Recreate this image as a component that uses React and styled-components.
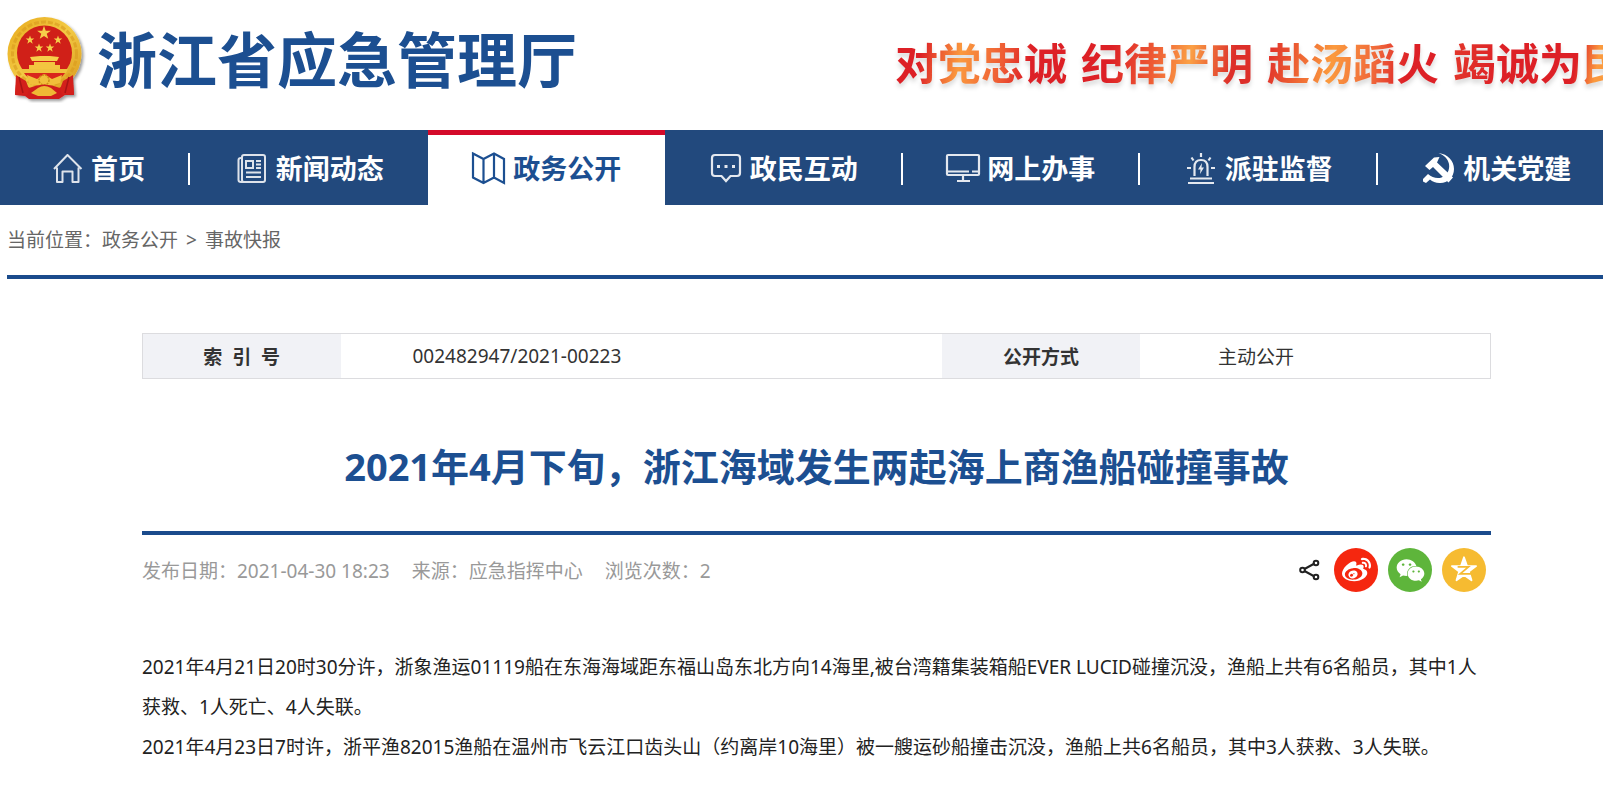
import styled, { createGlobalStyle } from "styled-components";
import { FaWeibo, FaWeixin } from "react-icons/fa";

const GlobalStyle = createGlobalStyle`
  * {
    box-sizing: border-box;
  }

  body {
    margin: 0;
    overflow-x: hidden;
    background-color: #fff;
    color: #222;
    font-family: "Noto Sans", "Noto Sans CJK SC", sans-serif;
    font-size: 19px;
  }

  a {
    color: inherit;
    text-decoration: none;
  }
`;

const HeaderBar = styled.header`
  display: flex;
  align-items: center;
  height: 130px;
  padding: 0 0 12px 7px;
  overflow: hidden;
`;

const Emblem = styled.svg`
  flex: none;
  width: 80px;
  height: 88px;
`;

const SiteName = styled.h1`
  flex: none;
  margin: 2px 0 0 10px;
  color: #1c4f91;
  font-size: 60px;
  font-weight: 700;
  line-height: 88px;
`;

const Slogan = styled.div`
  display: flex;
  flex: none;
  gap: 14px;
  margin: 10px -22px 0 auto;
  font-size: 43px;
  font-weight: 700;
  line-height: 60px;
  filter: drop-shadow(0 4px 2px rgba(0, 0, 0, 0.14));
`;

const SloganWord = styled.span`
  background: ${(props) => props.$fill};
  background-clip: text;
  color: transparent;
`;

const NavBar = styled.nav`
  background-color: #22497d;
  overflow: hidden;
`;

const NavList = styled.ul`
  display: grid;
  grid-template-columns: 4fr repeat(6, 5fr);
  width: calc(100% + 12px);
  margin: 0;
  padding: 0;
  list-style: none;
`;

const NavItem = styled.li`
  display: flex;
  align-items: center;
  height: 75px;
  padding-bottom: 2px;
  border-top: 5px solid ${(props) => (props.$active ? "#d40a2a" : "#22497d")};
  background-color: ${(props) => (props.$active ? "#fff" : "#22497d")};
  color: ${(props) => (props.$active ? "#1c4f91" : "#fff")};

  &::after {
    content: "";
    width: ${(props) => (props.$divider ? "2px" : "0")};
    height: 32px;
    background-color: #fff;
  }
`;

const NavLink = styled.a`
  display: flex;
  flex: 1;
  align-items: center;
  justify-content: center;
  gap: 6px;
  padding-left: ${(props) => (props.$first ? "6px" : "0")};
  font-size: 27px;
  font-weight: 700;
  line-height: 40px;

  svg {
    flex: none;
    width: 36px;
    height: 36px;
  }
`;

const Crumbs = styled.div`
  display: flex;
  gap: 8px;
  height: 74px;
  margin-left: 7px;
  padding-top: 20px;
  border-bottom: 4px solid #1a4b8c;
  color: #666;
  line-height: 30px;
`;

const Article = styled.main`
  margin: 54px 112px 0 142px;
`;

const InfoTable = styled.table`
  width: 100%;
  height: 46px;
  border: 1px solid #dcdcdf;
  border-collapse: collapse;
  table-layout: fixed;
  color: #333;
`;

const InfoLabel = styled.th`
  width: 198px;
  padding: 0;
  background-color: #f1f2f6;
  white-space: pre;
`;

const InfoValue = styled.td`
  width: ${(props) => props.$width};
  padding: 0 0 0 ${(props) => props.$indent};
`;

const Title = styled.h2`
  margin: 58px 0 0;
  padding-bottom: 36px;
  border-bottom: 4px solid #1a4b8c;
  color: #1c4f91;
  font-size: 38px;
  font-weight: 700;
  line-height: 58px;
  text-align: center;
`;

const MetaRow = styled.div`
  display: flex;
  align-items: center;
  gap: 22px;
  height: 70px;
  padding-right: 5px;
  color: #999;
`;

const ShareList = styled.div`
  display: flex;
  align-items: center;
  gap: 10px;
  margin-left: auto;
`;

const ShareMark = styled.svg`
  width: 22px;
  height: 22px;
  margin-right: 3px;
`;

const ShareButton = styled.button`
  display: flex;
  align-items: center;
  justify-content: center;
  width: 44px;
  height: 44px;
  padding: 0;
  border: 0;
  border-radius: 50%;
  background-color: ${(props) => props.$color};
  color: #fff;
  font-size: 29px;
`;

const Content = styled.div`
  margin-top: 42px;
  line-height: 40px;

  p {
    margin: 0;
  }
`;

const STAR = "0,-10 2.4,-3.2 9.5,-3.1 3.8,1.2 5.9,8.1 0,4 -5.9,8.1 -3.8,1.2 -9.5,-3.1 -2.4,-3.2";

const stars = [
  { x: 37, y: 18, size: 0.72 },
  { x: 23, y: 25, size: 0.45 },
  { x: 51, y: 25, size: 0.45 },
  { x: 32, y: 33, size: 0.45 },
  { x: 43, y: 33, size: 0.45 },
];

const NationalEmblem = () => (
  <Emblem viewBox="0 0 80 88" role="img" aria-label="国徽">
    <defs>
      <linearGradient id="gold" x1="0" y1="0" x2="1" y2="1">
        <stop offset="0" stopColor="#e8a91c" />
        <stop offset="0.5" stopColor="#f3cb45" />
        <stop offset="1" stopColor="#d9971a" />
      </linearGradient>
      <filter id="shade" x="-10%" y="-10%" width="130%" height="130%">
        <feDropShadow dx="2" dy="2" stdDeviation="1.5" floodOpacity="0.4" />
      </filter>
    </defs>
    <g filter="url(#shade)">
      <path d="M10 58 L8 80 L18 81 L22 84 L52 84 L58 80 L67 80 L65 58 Z" fill="#cf1c1c" />
      <circle cx="37.5" cy="39" r="37" fill="url(#gold)" />
      <circle cx="37.5" cy="39" r="32" fill="none" stroke="#d99a1e" strokeWidth="3" strokeDasharray="5 2" opacity="0.6" />
    </g>
    <circle cx="37.5" cy="38" r="27.5" fill="#d02018" />
    {stars.map((star) => (
      <polygon
        key={`${star.x}-${star.y}`}
        points={STAR}
        fill="#f6cf4a"
        transform={`translate(${star.x} ${star.y}) scale(${star.size})`}
      />
    ))}
    {/* gate */}
    <path d="M33 41 H43 L52 42 L50 46 H25 L23 42 Z" fill="#f6cf4a" />
    <path d="M27 47 H48 V50 H53 V54 H22 V50 H27 Z" fill="#f3c540" />
    <path d="M14 54 H61 L59 58 H16 Z" fill="#f0c23e" />
    <path d="M17 58 H58 Q54 64 48 66 H27 Q20 63 17 58 Z" fill="#d9251c" />
    {/* ribbon and gear */}
    <path d="M9 60 L19 66 L22 74 L20 80 L8 79 Z M66 60 L56 66 L53 74 L55 80 L67 79 Z" fill="#d3201b" />
    <path d="M20 60 L30 64 L37 59 L45 64 L55 60 L53 68 L46 70 L37 74 L29 70 L22 69 Z" fill="#f1bf3a" />
    <circle cx="37" cy="65" r="5" fill="none" stroke="#cf8d17" strokeWidth="1.5" strokeDasharray="2 1" />
    <path d="M22 73 Q37 66 53 73 L50 79 L43 76 L37 78 L31 76 L24 79 Z" fill="#cf1c1c" />
    <path d="M31 73 Q37 69 44 73 L50 78 L44 81 H31 L24 78 Z" fill="#efb934" />
    <path d="M12 62 L16 78 M62 62 L58 78" stroke="#a81414" strokeWidth="1.5" />
  </Emblem>
);

const HomeIcon = () => (
  <svg viewBox="0 0 36 36" fill="none" stroke="currentColor" strokeWidth="2" strokeLinejoin="round" opacity="0.85">
    <path d="M5 18 L18.5 4 L32.5 18 M8 16.5 V31 H13.5 V20.5 H23.5 V31 H29.5 V16.5" />
  </svg>
);

const NewsIcon = () => (
  <svg viewBox="0 0 36 36" fill="none" stroke="currentColor" strokeWidth="2" opacity="0.85">
    <rect x="8" y="4" width="23" height="27" rx="2" />
    <path d="M8 7 H7 Q4.5 7 4.5 9 V29 Q4.5 31 7 31 H11" />
    <rect x="12" y="10" width="7" height="7" />
    <path d="M22 10 H27 M22 13.5 H27 M22 17 H27 M12 21.5 H27 M12 26 H27" />
  </svg>
);

const MapIcon = () => (
  <svg viewBox="0 0 36 36" fill="none" stroke="currentColor" strokeWidth="2.2">
    <path d="M2 2.5 L12.5 8 L23 2.5 L33 8 V32 L23 26.5 L12.5 32 L2 26.5 Z M12.5 8 V32 M23 2.5 V26.5" />
  </svg>
);

const ChatIcon = () => (
  <svg viewBox="0 0 36 36" fill="none" stroke="currentColor" strokeWidth="2.2" opacity="0.88">
    <path d="M7 4 H29 Q32 4 32 7 V22 Q32 25 29 25 H22.5 L18 30 L13.5 25 H7 Q4 25 4 22 V7 Q4 4 7 4 Z" />
    <path d="M9 15.5 H12 M16.5 15.5 H19.5 M24 15.5 H27" strokeWidth="3" />
  </svg>
);

const ScreenIcon = () => (
  <svg viewBox="0 0 36 36" fill="none" stroke="currentColor" strokeWidth="2.2" opacity="0.88">
    <rect x="2" y="4" width="32" height="20" rx="1" />
    <path d="M2 20.5 H24 M27 20.5 H34 M18 24 V29 M12 30 H25" />
  </svg>
);

const AlarmIcon = () => (
  <svg viewBox="0 0 36 36" fill="none" stroke="currentColor" strokeWidth="2.2" opacity="0.88">
    <path d="M11.5 25 V16 Q11.5 9 18 9 Q24.5 9 24.5 16 V25 M7 27.5 H29 M5 32 H31" />
    <path d="M18 2 V6 M8.5 6.5 L10.5 9.5 M27.5 6.5 L25.5 9.5 M4 17 H8 M28 17 H32" />
    <path d="M19 12 L15 18.5 H17.5 L17 23 L21 16.5 H18.5 Z" fill="currentColor" stroke="none" />
  </svg>
);

const PartyIcon = () => (
  <svg viewBox="0 0 36 36" fill="currentColor">
    <path d="M4 15 L13 6.5 L18.5 6 L16 11.5 L32 26.5 L27.5 31.5 L12 16 L8.5 19 Z" />
    <path d="M17.5 2 C27 3 33 10 33 18 C33 27 26 32.5 18.5 32 C14.5 32 11.5 30.5 9 28.5 L5 32 L2 30.5 L2 28 L7 23 C11 26.5 16 28 20.5 26.5 C26 24.5 29 19 28 13 C27 8 23.5 4.5 17.5 2 Z" />
  </svg>
);

const navItems = [
  { label: "首页", Icon: HomeIcon, divider: true, first: true },
  { label: "新闻动态", Icon: NewsIcon },
  { label: "政务公开", Icon: MapIcon, active: true },
  { label: "政民互动", Icon: ChatIcon, divider: true },
  { label: "网上办事", Icon: ScreenIcon, divider: true },
  { label: "派驻监督", Icon: AlarmIcon, divider: true },
  { label: "机关党建", Icon: PartyIcon },
];

const sloganWords = [
  { text: "对党忠诚", fill: "linear-gradient(100deg, #dd2026 16%, #fb9a3e 38%, #ee5a34 62%, #dd2026 76%)" },
  { text: "纪律严明", fill: "linear-gradient(100deg, #dd2026 18%, #ee5a34 42%, #fba045 62%, #dd2f2a 86%)" },
  { text: "赴汤蹈火", fill: "linear-gradient(100deg, #e2352b 4%, #fb9a3e 38%, #f0683a 62%, #dd2026 80%)" },
  { text: "竭诚为民", fill: "linear-gradient(100deg, #e2352b 4%, #dd2026 30%, #dd2026 70%, #fb9a3e 82%)" },
];

export default function App() {
  return (
    <>
      <GlobalStyle />
      <HeaderBar>
        <NationalEmblem />
        <SiteName>浙江省应急管理厅</SiteName>
        <Slogan>
          {sloganWords.map((word) => (
            <SloganWord key={word.text} $fill={word.fill}>
              {word.text}
            </SloganWord>
          ))}
        </Slogan>
      </HeaderBar>

      <NavBar>
        <NavList>
          {navItems.map(({ label, Icon, active, divider, first }) => (
            <NavItem key={label} $active={active} $divider={divider}>
              <NavLink href="#" $first={first}>
                <Icon />
                {label}
              </NavLink>
            </NavItem>
          ))}
        </NavList>
      </NavBar>

      <Crumbs>
        <span>
          当前位置：<a href="#">政务公开</a>
        </span>
        <span>&gt;</span>
        <a href="#">事故快报</a>
      </Crumbs>

      <Article>
        <InfoTable>
          <tbody>
            <tr>
              <InfoLabel scope="row">索  引  号</InfoLabel>
              <InfoValue $indent="72px">002482947/2021-00223</InfoValue>
              <InfoLabel scope="row">公开方式</InfoLabel>
              <InfoValue $width="26%" $indent="78px">主动公开</InfoValue>
            </tr>
          </tbody>
        </InfoTable>

        <Title>2021年4月下旬，浙江海域发生两起海上商渔船碰撞事故</Title>

        <MetaRow>
          <span>发布日期：2021-04-30 18:23</span>
          <span>来源：应急指挥中心</span>
          <span>浏览次数：2</span>
          <ShareList>
            <ShareMark viewBox="0 0 22 22" fill="none" stroke="#222" strokeWidth="2">
              <path d="M5.5 10 L15.5 4.5 M5.5 12 L15.5 17.5" />
              <circle cx="3.5" cy="11" r="2.3" />
              <circle cx="17" cy="4" r="2.3" />
              <circle cx="17" cy="18" r="2.3" />
            </ShareMark>
            <ShareButton $color="#f5270f" aria-label="微博">
              <FaWeibo />
            </ShareButton>
            <ShareButton $color="#5eb53b" aria-label="微信">
              <FaWeixin />
            </ShareButton>
            <ShareButton $color="#f6bb31" aria-label="QQ空间">
              <svg width="28" height="28" viewBox="-11 -11 22 22" fill="currentColor">
                <polygon points={STAR} stroke="currentColor" strokeWidth="1.4" strokeLinejoin="round" />
                <path d="M-5 -2.5 H3.5 L-3 3 H5.5" fill="none" stroke="#f6bb31" strokeWidth="1.4" />
              </svg>
            </ShareButton>
          </ShareList>
        </MetaRow>

        <Content>
          <p>
            2021年4月21日20时30分许，浙象渔运01119船在东海海域距东福山岛东北方向14海里,被台湾籍集装箱船EVER
            LUCID碰撞沉没，渔船上共有6名船员，其中1人获救、1人死亡、4人失联。
          </p>
          <p>
            2021年4月23日7时许，浙平渔82015渔船在温州市飞云江口齿头山（约离岸10海里）被一艘运砂船撞击沉没，渔船上共6名船员，其中3人获救、3人失联。
          </p>
        </Content>
      </Article>
    </>
  );
}
